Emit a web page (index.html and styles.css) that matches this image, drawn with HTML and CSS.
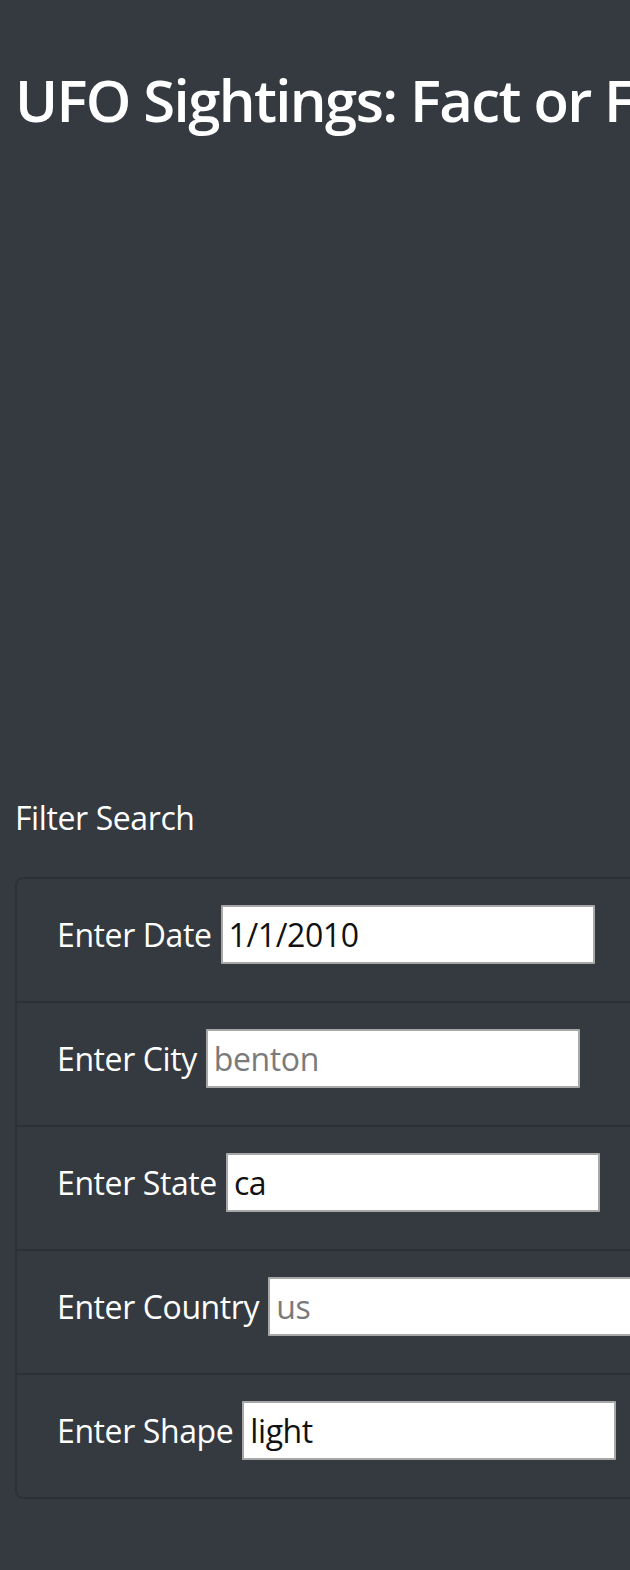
FILE: index.html
```html
<!DOCTYPE html>
<html lang="en">
<head>
<meta charset="utf-8">
<title>UFO Sightings</title>
<link rel="stylesheet" href="styles.css">
</head>
<body>
<div class="page">
  <header class="hero">
    <h1 class="hero-title">UFO Sightings: Fact or Fiction?</h1>
  </header>
  <section class="filters">
    <h2 class="filters-title">Filter Search</h2>
    <div class="card">
      <ul class="filter-list">
        <li class="filter-item">
          <label class="filter-label" for="datetime">Enter Date</label>
          <input class="filter-input" id="datetime" type="text" value="1/1/2010">
        </li>
        <li class="filter-item">
          <label class="filter-label" for="city">Enter City</label>
          <input class="filter-input" id="city" type="text" placeholder="benton">
        </li>
        <li class="filter-item">
          <label class="filter-label" for="state">Enter State</label>
          <input class="filter-input" id="state" type="text" value="ca">
        </li>
        <li class="filter-item">
          <label class="filter-label" for="country">Enter Country</label>
          <input class="filter-input" id="country" type="text" placeholder="us">
        </li>
        <li class="filter-item">
          <label class="filter-label" for="shape">Enter Shape</label>
          <input class="filter-input" id="shape" type="text" value="light">
        </li>
      </ul>
    </div>
  </section>
</div>
</body>
</html>
```

FILE: styles.css
```css
html, body {
  margin: 0;
  padding: 0;
  background: #343a40;
  overflow-x: hidden;
}

body {
  font-family: "Open Sans", "Noto Sans", sans-serif;
  color: #ffffff;
}

.page {
  padding: 0 15px;
  width: 1000px;
}

.hero {
  padding-top: 65px;
  height: 730px;
  box-sizing: border-box;
}

.hero-title {
  margin: 0;
  font-size: 58px;
  line-height: 1.2;
  font-weight: 600;
  letter-spacing: -1.6px;
  white-space: nowrap;
}

.filters-title {
  margin: 64px 0 35px;
  font-size: 32px;
  line-height: 48px;
  font-weight: 400;
  letter-spacing: -0.4px;
}

.card {
  width: 900px;
  border: 2px solid rgba(0, 0, 0, 0.15);
  border-radius: 8px;
}

.filter-list {
  list-style: none;
  margin: 0;
  padding: 0;
}

.filter-item {
  display: flex;
  align-items: center;
  gap: 9px;
  padding: 26px 40px 37px;
  border-bottom: 2px solid rgba(0, 0, 0, 0.15);
}

.filter-item:last-child {
  border-bottom: none;
}

.filter-label {
  font-size: 32px;
  line-height: 48px;
  letter-spacing: -0.4px;
  color: #ffffff;
}

.filter-input {
  box-sizing: border-box;
  width: 374px;
  height: 59px;
  margin: 0;
  padding: 2px 6px;
  border: 2px solid #a8a8a8;
  border-radius: 1px;
  background: #ffffff;
  font-family: "Open Sans", "Noto Sans", sans-serif;
  font-size: 32px;
  letter-spacing: -0.4px;
  color: #111111;
}

.filter-input::placeholder {
  color: #7a7a7a;
}
```
